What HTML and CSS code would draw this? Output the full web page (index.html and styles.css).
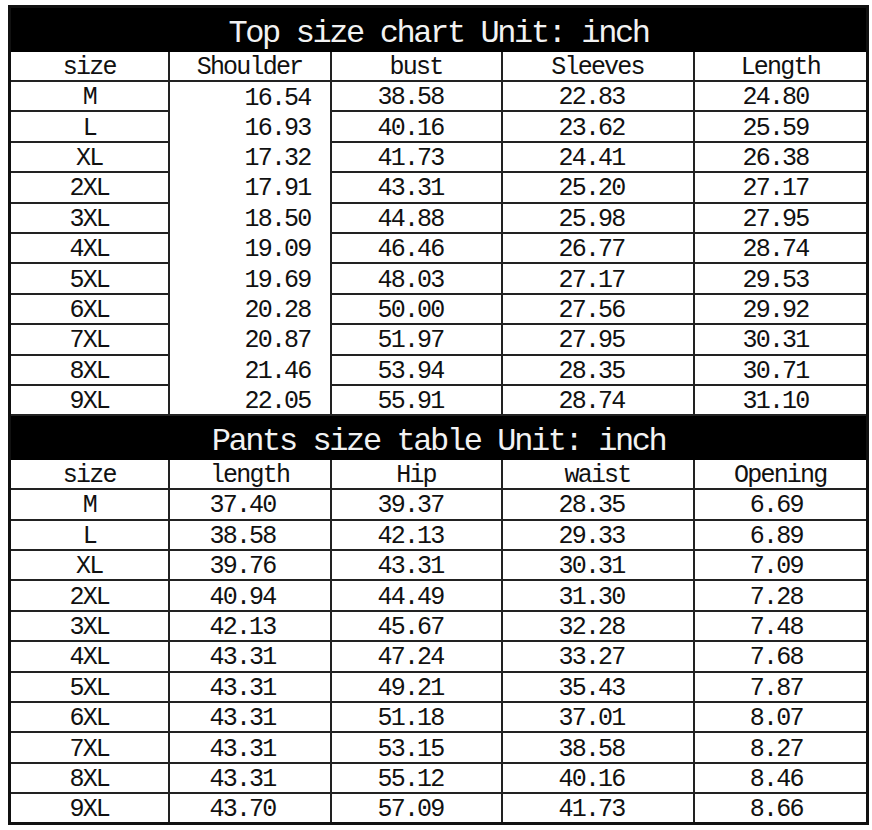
FILE: index.html
```html
<!DOCTYPE html>
<html>
<head>
<meta charset="utf-8">
<link rel="stylesheet" href="styles.css">
</head>
<body>
<table class="chart">
  <colgroup>
    <col class="c1"><col class="c2"><col class="c3"><col class="c4"><col class="c5">
  </colgroup>
  <tbody class="top">
    <tr class="title"><td colspan="5">Top size chart Unit: inch</td></tr>
    <tr class="head"><td>size</td><td>Shoulder</td><td>bust</td><td>Sleeves</td><td>Length</td></tr>
    <tr><td>M</td><td class="sh">16.54</td><td class="v3">38.58</td><td class="v4">22.83</td><td class="v5">24.80</td></tr>
    <tr><td>L</td><td class="sh">16.93</td><td class="v3">40.16</td><td class="v4">23.62</td><td class="v5">25.59</td></tr>
    <tr><td>XL</td><td class="sh">17.32</td><td class="v3">41.73</td><td class="v4">24.41</td><td class="v5">26.38</td></tr>
    <tr><td>2XL</td><td class="sh">17.91</td><td class="v3">43.31</td><td class="v4">25.20</td><td class="v5">27.17</td></tr>
    <tr><td>3XL</td><td class="sh">18.50</td><td class="v3">44.88</td><td class="v4">25.98</td><td class="v5">27.95</td></tr>
    <tr><td>4XL</td><td class="sh">19.09</td><td class="v3">46.46</td><td class="v4">26.77</td><td class="v5">28.74</td></tr>
    <tr><td>5XL</td><td class="sh">19.69</td><td class="v3">48.03</td><td class="v4">27.17</td><td class="v5">29.53</td></tr>
    <tr><td>6XL</td><td class="sh">20.28</td><td class="v3">50.00</td><td class="v4">27.56</td><td class="v5">29.92</td></tr>
    <tr><td>7XL</td><td class="sh">20.87</td><td class="v3">51.97</td><td class="v4">27.95</td><td class="v5">30.31</td></tr>
    <tr><td>8XL</td><td class="sh">21.46</td><td class="v3">53.94</td><td class="v4">28.35</td><td class="v5">30.71</td></tr>
    <tr><td>9XL</td><td class="sh sh-last">22.05</td><td class="v3">55.91</td><td class="v4">28.74</td><td class="v5">31.10</td></tr>
  </tbody>
  <tbody class="pants">
    <tr class="title"><td colspan="5">Pants size table Unit: inch</td></tr>
    <tr class="head"><td>size</td><td>length</td><td>Hip</td><td>waist</td><td>Opening</td></tr>
    <tr><td>M</td><td class="v2">37.40</td><td class="v3">39.37</td><td class="v4">28.35</td><td class="op">6.69</td></tr>
    <tr><td>L</td><td class="v2">38.58</td><td class="v3">42.13</td><td class="v4">29.33</td><td class="op">6.89</td></tr>
    <tr><td>XL</td><td class="v2">39.76</td><td class="v3">43.31</td><td class="v4">30.31</td><td class="op">7.09</td></tr>
    <tr><td>2XL</td><td class="v2">40.94</td><td class="v3">44.49</td><td class="v4">31.30</td><td class="op">7.28</td></tr>
    <tr><td>3XL</td><td class="v2">42.13</td><td class="v3">45.67</td><td class="v4">32.28</td><td class="op">7.48</td></tr>
    <tr><td>4XL</td><td class="v2">43.31</td><td class="v3">47.24</td><td class="v4">33.27</td><td class="op">7.68</td></tr>
    <tr><td>5XL</td><td class="v2">43.31</td><td class="v3">49.21</td><td class="v4">35.43</td><td class="op">7.87</td></tr>
    <tr><td>6XL</td><td class="v2">43.31</td><td class="v3">51.18</td><td class="v4">37.01</td><td class="op">8.07</td></tr>
    <tr><td>7XL</td><td class="v2">43.31</td><td class="v3">53.15</td><td class="v4">38.58</td><td class="op">8.27</td></tr>
    <tr><td>8XL</td><td class="v2">43.31</td><td class="v3">55.12</td><td class="v4">40.16</td><td class="op">8.46</td></tr>
    <tr><td>9XL</td><td class="v2">43.70</td><td class="v3">57.09</td><td class="v4">41.73</td><td class="op">8.66</td></tr>
  </tbody>
</table>
</body>
</html>
```

FILE: styles.css
```css
html, body {
  margin: 0;
  padding: 0;
  background: #ffffff;
}

body {
  padding: 5px 0 0 8px;
}

.chart {
  border-collapse: collapse;
  table-layout: fixed;
  width: 858px;
  border: 3px solid #111;
  font-family: "Liberation Mono", "DejaVu Sans Mono", monospace;
  font-size: 25px;
  letter-spacing: -1.8px;
  color: #111;
}

.c1 { width: 159px; }
.c2 { width: 162px; }
.c3 { width: 171px; }
.c4 { width: 192px; }
.c5 { width: 174px; }

.chart td {
  border: 2px solid #222;
  height: 30.4px;
  padding: 4px 0 0 0;
  text-align: center;
  line-height: 24px;
  vertical-align: middle;
  white-space: nowrap;
  box-sizing: border-box;
}

.chart .title td {
  background: #000;
  color: #f2f2f2;
  height: 43px;
  font-size: 32px;
  letter-spacing: -2.4px;
  line-height: 32px;
  padding: 10px 0 0 0;
  border-color: #000;
}

.chart .head td {
  height: 30px;
}

.chart td.sh {
  text-align: right;
  padding-right: 19px;
  border-bottom-style: hidden;
}

.chart td.sh-last {
  border-bottom-style: solid;
}

.chart td.v2 {
  text-align: left;
  padding-left: 40px;
}

.chart td.v3 {
  text-align: left;
  padding-left: 46px;
}

.chart td.v4 {
  text-align: left;
  padding-left: 56px;
}

.chart td.v5 {
  text-align: left;
  padding-left: 48px;
}

.chart td.op {
  text-align: center;
  padding-right: 8px;
}
```
